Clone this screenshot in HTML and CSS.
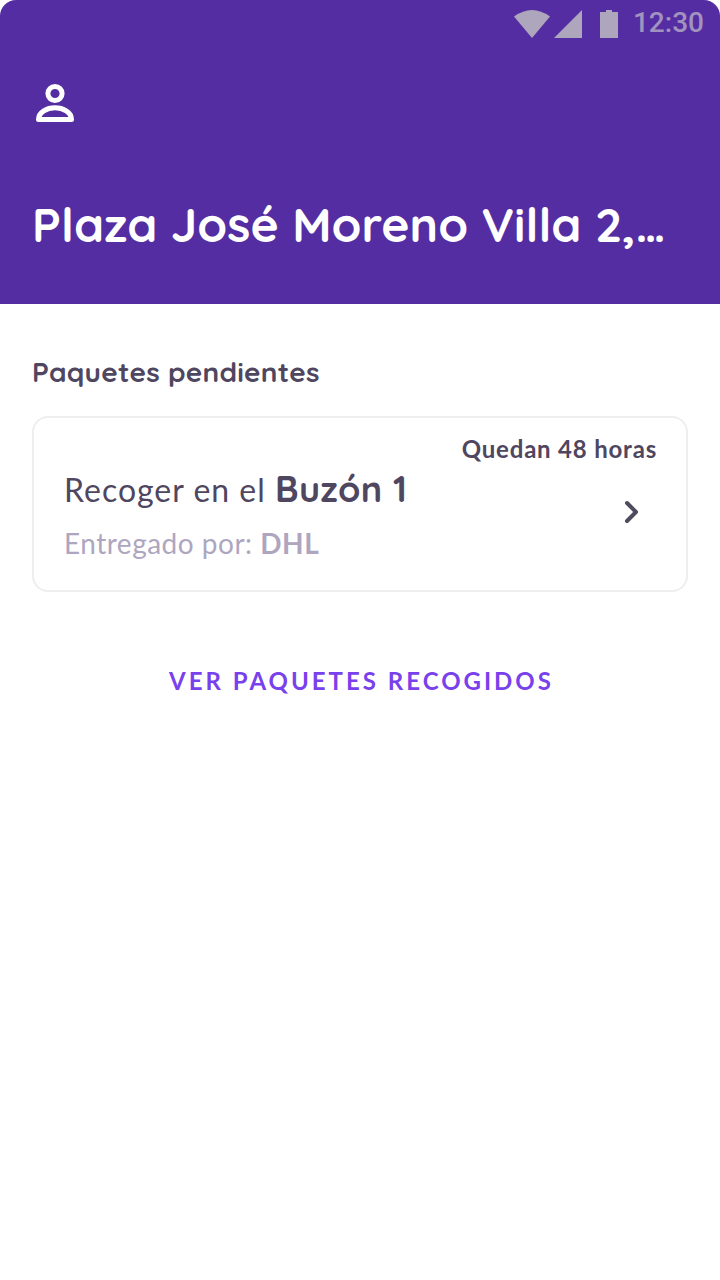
FILE: index.html
```html
<!DOCTYPE html>
<html lang="es">
<head>
<meta charset="utf-8">
<title>Paquetes pendientes</title>
<link rel="stylesheet" href="styles.css">
</head>
<body>
<header class="header">
  <div class="status">
    <svg class="status-icons" width="106" height="30" viewBox="0 0 106 30" fill="currentColor">
      <path d="M0 6.500Q18-6.500 36 6.500L18 28Z"/>
      <path d="M40 28L68 0V28Z"/>
      <path d="M86 2H92V0H98V2H104V28H86Z"/>
    </svg>
    <span class="clock">12:30</span>
  </div>
  <svg class="profile" width="40" height="40" viewBox="0 0 40 40" fill="none" stroke="#fff" stroke-width="5" stroke-linejoin="round">
    <circle cx="20" cy="10.500" r="7.100"/>
    <path d="M3.500 36.500C3.500 29 12 24.700 20 24.700S36.500 29 36.500 36.500Z"/>
  </svg>
  <h1 class="address">Plaza José Moreno Villa 2,…</h1>
</header>
<main class="content">
  <h2 class="section-title">Paquetes pendientes</h2>
  <article class="card">
    <div class="deadline">Quedan 48 horas</div>
    <div class="card-row">
      <div class="details">
        <div class="pickup">Recoger en el <b class="box">Buzón 1</b></div>
        <div class="carrier">Entregado por: <b>DHL</b></div>
      </div>
      <svg class="chevron" width="16" height="24" viewBox="0 0 16 24" fill="none" stroke="#4f4a5e" stroke-width="4" stroke-linecap="round" stroke-linejoin="round"><path d="M3 3L12 12L3 21"/></svg>
    </div>
  </article>
  <a class="collected">VER PAQUETES RECOGIDOS</a>
</main>
</body>
</html>
```
FILE: styles.css
```css
* { box-sizing: border-box; }
body { margin: 0; background: #fff; color: #4f465f; font-family: Lato, sans-serif; }
h1, h2 { margin: 0; white-space: nowrap; }
.header { height: 304px; background: #552da3; border-radius: 16px 16px 0 0; color: #fff; }
.status { height: 48px; padding: 10px 16px 0 0; display: flex; justify-content: flex-end; gap: 13px; color: #aea6bc; }
.clock { font: 500 28px/28px Roboto, sans-serif; margin-top: -1px; color: #a193be; }
.profile { display: block; margin: 35px 0 0 35px; }
.address, .section-title, .box { font-family: Quicksand, Inter, sans-serif; font-weight: 700; }
.address { margin: 71px 0 0 32px; font-size: 48px; line-height: 60px; }
.content { padding: 48px 32px; display: flex; flex-direction: column; }
.section-title { font-size: 28px; line-height: 40px; letter-spacing: .22px; }
.card { margin-top: 24px; height: 176px; border: 2px solid #eee; border-radius: 16px; padding: 15px 29px 0 30px; }
.deadline { text-align: right; font-size: 24px; line-height: 32px; font-weight: 700; letter-spacing: .8px; }
.card-row { display: flex; justify-content: space-between; }
.pickup { height: 48px; font-size: 32px; line-height: 50px; letter-spacing: 1px; white-space: nowrap; }
.box { font-size: 36px; line-height: 40px; letter-spacing: .3px; }
.carrier { margin-top: 10px; font-size: 28px; line-height: 40px; letter-spacing: .5px; color: #aea6bf; }
.chevron { margin: 35px 17px 0 0; }
.collected { margin: 71px 0 0 3px; align-self: center; font-size: 24px; line-height: 36px; font-weight: 700; letter-spacing: 3px; color: #7841ec; }
```
